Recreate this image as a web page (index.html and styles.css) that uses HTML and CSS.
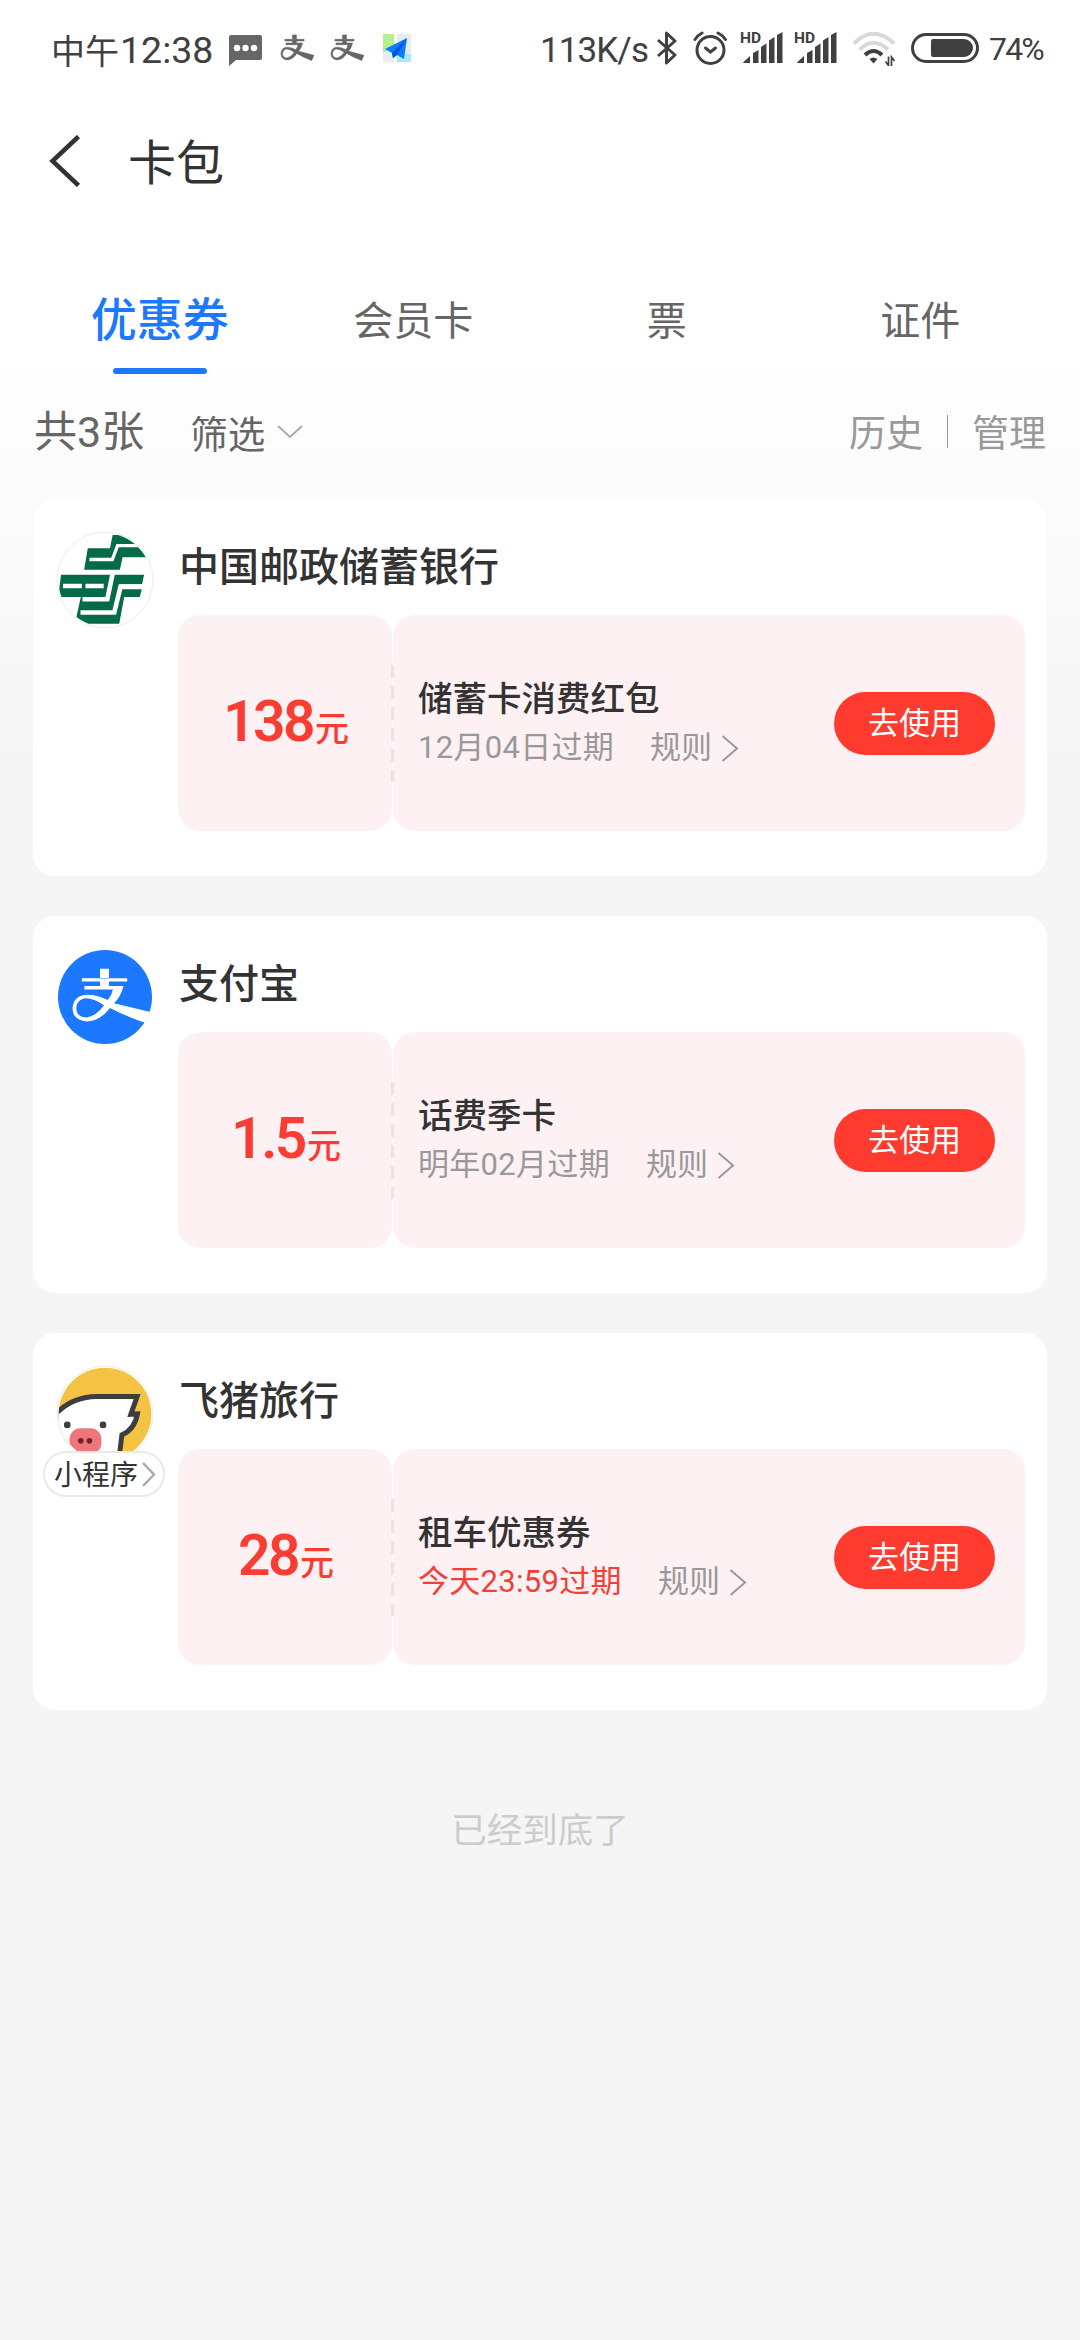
FILE: index.html
```html
<!DOCTYPE html>
<html lang="zh-CN">
<head>
<meta charset="utf-8">
<title>卡包</title>
<link rel="stylesheet" href="styles.css">
</head>
<body>
<svg class="defs" width="0" height="0" aria-hidden="true">
  <symbol id="zhi" viewBox="120 170 250 172" preserveAspectRatio="none">
    <path d="M155 204H292V214H237V228H281Q272 262 252 280L362 306L346 339Q290 320 240 294Q210 334 170 335Q126 330 127 293Q131 255 172 254Q200 254 234 270Q245 254 249 238H163V228H210V214H155ZM210 176H237V206H210ZM222 286Q190 264 164 265Q140 270 138 294Q138 320 168 323Q198 320 222 286Z" fill="currentColor" fill-rule="evenodd"/>
  </symbol>
  <symbol id="signal" viewBox="0 0 41 33">
    <path d="M1 31.500L8 25V32H1.500ZM11 22L16.500 19V32H11ZM19 16L24.500 12.500V32H19ZM27 9.500L32.500 6V32H27ZM35 4L40.500 1V32H35Z" fill="#404040"/>
  </symbol>
  <symbol id="chev" viewBox="0 0 18 27">
    <path d="M1.500 1L16 13.500L1.500 26" fill="none" stroke="currentColor" stroke-width="2"/>
  </symbol>
</svg>

<header class="status">
  <span class="clock"><span class="noon">中午</span><span class="time">12:38</span></span>
  <svg class="i-msg" viewBox="0 0 33 31"><path d="M2 0H31Q33 0 33 2V23Q33 25 31 25H7L0 31V2Q0 0 2 0Z" fill="#666"/><g fill="#fff"><circle cx="8" cy="13" r="3.200"/><circle cx="16.500" cy="13" r="3.200"/><circle cx="25" cy="13" r="3.200"/></g></svg>
  <svg class="i-zhi"><use href="#zhi"/></svg>
  <svg class="i-zhi two"><use href="#zhi"/></svg>
  <svg class="i-map" viewBox="0 0 28 28"><path d="M0 0H11V14L0 19Z" fill="#b4f08c"/><path d="M0 19L11 14V28H0ZM14 0H28V20H14Z" fill="#e4eef3"/><path d="M14 20H28V28H14Z" fill="#a5e9ff"/><path d="M24 4L2 15L9 19L10 24L14 21L21 25Z" fill="#0a7cff"/><path d="M24 4L9 19L10 24L14 21Z" fill="#0553d8"/></svg>
  <span class="speed">113K/s</span>
  <svg class="i-bt" viewBox="0 0 20 34"><path d="M1 9L18 24L9.500 32V2L18 10L1 25" fill="none" stroke="#404040" stroke-width="3" stroke-linejoin="round"/></svg>
  <svg class="i-alarm" viewBox="0 0 34 34"><g fill="none" stroke="#404040" stroke-width="3" stroke-linecap="round"><circle cx="17.500" cy="19" r="13.500"/><path d="M2 8.500Q5 4 9 2M25 2Q30 4.500 32.500 8.500"/><path d="M12.500 17L17.500 21L22.500 17"/></g></svg>
  <span class="sim"><svg><use href="#signal"/></svg><b>HD</b></span>
  <span class="sim second"><svg><use href="#signal"/></svg><b>HD</b></span>
  <svg class="i-wifi" viewBox="0 0 42 34"><g fill="none" stroke-width="4"><path d="M1 11.500Q20.500 -8 41 11.500M6.500 17.500Q20.500 4 35 17.500" stroke="#d9d9d9"/><path d="M12 23Q20.500 15 29 23" stroke="#404040"/></g><path d="M16.500 27Q20.500 24 24.500 27L20.500 31.500Z" fill="#404040"/><path d="M35.500 24.500V33.500L32.500 29.500M38.500 34V25L41.500 29" fill="none" stroke="#404040" stroke-width="1.700"/></svg>
  <svg class="i-bat" viewBox="0 0 68 30"><rect x="1.500" y="1.500" width="65" height="27" rx="13.500" fill="none" stroke="#404040" stroke-width="3"/><path d="M22 6H53A9 9 0 0 1 53 24H22Q20 24 20 22V8Q20 6 22 6Z" fill="#404040"/></svg>
  <span class="pct">74%</span>
</header>

<nav class="titlebar">
  <svg class="back" viewBox="0 0 32 52"><path d="M29.500 1.500L3.500 26L29.500 50.500" fill="none" stroke="#333" stroke-width="4.500"/></svg>
  <h1>卡包</h1>
</nav>

<div class="tabs">
  <span class="tab active">优惠券</span><span class="tab">会员卡</span><span class="tab">票</span><span class="tab">证件</span>
</div>

<div class="filter">
  <span class="count">共3张</span>
  <span class="pick">筛选</span>
  <svg class="down" viewBox="0 0 26 14"><path d="M1 1L13 12L25 1" fill="none" stroke="#aaa" stroke-width="2"/></svg>
  <span class="hist">历史</span><i class="bar"></i><span class="hist">管理</span>
</div>

<main class="list">
  <section class="card">
    <div class="brand">
      <svg class="logo" viewBox="17 17 296 296"><defs><clipPath id="disc"><circle cx="165" cy="165" r="141"/></clipPath></defs><circle cx="165" cy="165" r="145" fill="#fff" stroke="#ebebeb" stroke-width="3"/>
        <g clip-path="url(#disc)"><path d="M188 29H230L295 96H218L210 134H102L113 69H180ZM32 149H283L277 178H212V193H276L270 216H223L208 297H74L92 216H24Z" fill="#036b46"/><g fill="none" stroke="#fff"><path d="M118 103H187L203 61H275" stroke-width="10"/><path d="M97 223H172L188 146" stroke-width="14"/><path d="M91 263H193L212 185H284" stroke-width="14"/><path d="M38 183H95M106 183H161" stroke-width="14"/></g></g></svg>
    </div>
    <div class="body">
      <h2>中国邮政储蓄银行</h2>
      <div class="coupon">
        <div class="amount"><b>138</b><em>元</em></div>
        <div class="info">
          <div class="desc"><h3>储蓄卡消费红包</h3><p><span class="date">12月04日过期</span><span class="rule">规则</span><svg class="go"><use href="#chev"/></svg></p></div>
          <button class="use">去使用</button>
        </div>
      </div>
    </div>
  </section>

  <section class="card">
    <div class="brand">
      <svg class="logo" viewBox="77 113 296 296"><circle cx="225" cy="261" r="142" fill="#1b78ff"/><svg x="120" y="170" width="250" height="172" color="#fff"><use href="#zhi"/></svg></svg>
    </div>
    <div class="body">
      <h2>支付宝</h2>
      <div class="coupon">
        <div class="amount"><b>1.5</b><em>元</em></div>
        <div class="info">
          <div class="desc"><h3>话费季卡</h3><p><span class="date">明年02月过期</span><span class="rule">规则</span><svg class="go"><use href="#chev"/></svg></p></div>
          <button class="use">去使用</button>
        </div>
      </div>
    </div>
  </section>

  <section class="card">
    <div class="brand">
      <svg class="logo" viewBox="17 17 296 296"><defs><clipPath id="pig"><circle cx="165" cy="165" r="140"/></clipPath></defs><circle cx="165" cy="165" r="145" fill="#fff" stroke="#ebebeb" stroke-width="3"/>
        <g clip-path="url(#pig)"><path d="M24 20H310V310H24Z" fill="#f5c344"/><path d="M18 163Q66 113 140 112H262L243 166L263 165Q254 212 216 228L206 310H18Z" fill="#fff" stroke="#3d3d3d" stroke-width="15"/><path d="M20 172Q24 165 28 162V300H20Z" fill="#fff"/><g fill="#3d3d3d"><circle cx="51" cy="198" r="10"/><circle cx="159" cy="198" r="10"/></g><rect x="58" y="208" width="96" height="78" rx="33" fill="#ee757a"/><g fill="#6b2529"><circle cx="92" cy="246" r="8.500"/><circle cx="118" cy="246" r="8.500"/></g></g></svg>
      <span class="mini">小程序<svg viewBox="0 0 14 25"><path d="M1 1L12 12.500L1 24" fill="none" stroke="#aaa" stroke-width="2.500"/></svg></span>
    </div>
    <div class="body">
      <h2>飞猪旅行</h2>
      <div class="coupon">
        <div class="amount"><b>28</b><em>元</em></div>
        <div class="info">
          <div class="desc"><h3>租车优惠券</h3><p><span class="date urgent">今天23:59过期</span><span class="rule">规则</span><svg class="go"><use href="#chev"/></svg></p></div>
          <button class="use">去使用</button>
        </div>
      </div>
    </div>
  </section>
</main>
<footer class="end">已经到底了</footer>
</body>
</html>
```
FILE: styles.css
```css
* { box-sizing: border-box; margin: 0; padding: 0; }
body {
  width: 1080px; height: 2340px; overflow: hidden;
  font-family: Roboto, "Noto Sans CJK SC", sans-serif;
  color: #333;
  background: linear-gradient(#fff 340px, #fbfbfb 500px, #f5f5f5 760px);
}
svg { display: block; flex: none; }
h1, h2, h3, em { font-weight: 400; font-style: normal; }
.defs { position: absolute; }

.status { display: flex; align-items: center; height: 98px; padding-left: 51px; color: #404040; white-space: nowrap; }
.clock { display: flex; align-items: center; width: 178px; }
.noon { font-size: 34px; width: 69px; }
.time { font-size: 37.500px; padding-top: 2px; }
.i-msg { width: 33px; height: 31px; margin-top: 2px; }
.i-zhi { width: 35px; height: 27px; margin: -3px 0 0 18px; color: #666; stroke: #666; stroke-width: 4px; }
.i-zhi.two { margin-left: 15px; }
.i-map { width: 28px; height: 28px; margin: -2px 0 0 18px; }
.speed { font-size: 35px; width: 117px; margin-left: 129px; padding-top: 2px; letter-spacing: -0.900px; }
.i-bt { width: 20px; height: 34px; margin-top: -2px; }
.i-alarm { width: 34px; height: 34px; margin: -2px 0 0 16px; }
.sim { position: relative; width: 41px; height: 33px; margin: -3px 0 0 15px; }
.sim svg { width: 41px; height: 33px; }
.sim.second { margin-left: 13px; }
.sim b { position: absolute; left: -2px; top: -1px; font-size: 15.500px; line-height: 16px; font-weight: 700; }
.i-wifi { width: 42px; height: 34px; margin-left: 16px; }
.i-bat { width: 68px; height: 30px; margin: -2px 0 0 16px; }
.pct { font-size: 32px; margin-left: 10px; letter-spacing: -1.800px; }

.titlebar { display: flex; align-items: center; height: 126px; padding-left: 49px; }
.back { width: 32px; height: 52px; }
.titlebar h1 { font-size: 48px; margin-left: 47px; padding-top: 5px; line-height: 60px; }

.tabs { display: grid; grid-template-columns: repeat(4, 1fr); height: 150px; padding: 58px 33px 0; }
.tab { text-align: center; font-size: 40px; line-height: 80px; color: #666; }
.tab.active { font-size: 46px; line-height: 76px; font-weight: 500; color: #1b78ff; }
.tab.active::after { content: ""; display: block; width: 94px; height: 6px; border-radius: 3px; margin: 10px auto 0; background: #1b78ff; }

.filter { display: flex; align-items: center; height: 125px; padding: 0 34px 11px; color: #666; }
.filter .count { font-size: 43px; line-height: 60px; padding-top: 2px; }
.pick { font-size: 37.500px; margin-left: 46px; }
.down { width: 26px; height: 14px; margin: 2px auto 0 12px; }
.hist { font-size: 37px; color: #999; }
.bar { width: 1px; height: 33px; margin: 0 24px; background: #999; }

.list { display: grid; gap: 40px; padding: 0 33px; }
.card { display: flex; height: 377px; border-radius: 22px; background: #fff; }
.brand { width: 145px; padding: 32px 0 0 23px; flex: none; }
.logo { width: 98px; height: 98px; }
.mini { position: relative; display: flex; align-items: center; width: 122px; height: 46px; margin: -12px 0 0 -13px; padding: 0 0 2px 9px; border: 2px solid #e9e9e9; border-radius: 23px; background: #fff; font-size: 28px; }
.mini svg { width: 14px; height: 25px; margin: 2px 0 0 4px; }
.body { flex: none; width: 847px; }
.body h2 { height: 116px; padding: 39px 0 0 1px; font-size: 40px; line-height: 60px; font-weight: 500; }
.coupon { display: flex; gap: 1px; height: 216px; position: relative; }
.coupon::after { content: ""; position: absolute; left: 213px; top: 50px; width: 3px; height: 117px; background: repeating-linear-gradient(#fadde1 0 13px, transparent 13px 21px); }
.amount, .info { border-radius: 22px; background: #fef1f3; }
.amount { width: 214px; display: flex; align-items: baseline; justify-content: center; padding: 75px 0 0 2px; color: #f93d33; line-height: 64px; }
.amount b { font-size: 57px; font-weight: 600; letter-spacing: -2.500px; margin-right: 2px; }
.amount em { font-size: 34px; font-weight: 500; }
.info { flex: 1; display: flex; align-items: center; justify-content: space-between; padding: 0 30px 0 25px; }
.desc { padding-top: 2px; }
.desc h3 { font-size: 34.500px; line-height: 48px; font-weight: 500; }
.desc p { display: flex; align-items: center; font-size: 31px; line-height: 50px; color: #999; }
.date { letter-spacing: 0.300px; }
.desc .urgent { color: #ef4138; }
.rule { margin-left: 36px; }
.go { width: 18px; height: 27px; margin: 0 0 0 9px; }
.use { width: 161px; height: 63px; border: 0; border-radius: 32px; background: #ff3b30; color: #fff; font: 31px/60px Roboto, "Noto Sans CJK SC", sans-serif; padding-top: 1px; }
.end { padding-top: 91px; text-align: center; font-size: 35.500px; line-height: 60px; color: #ccc; }
```
